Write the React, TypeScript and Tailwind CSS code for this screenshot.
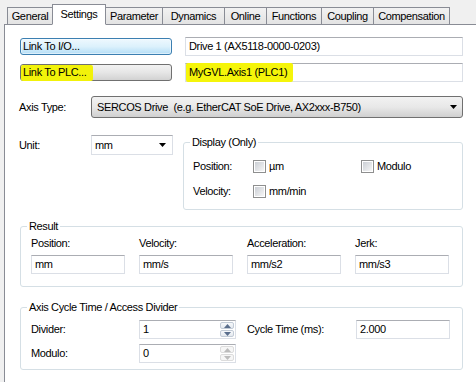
import React from 'react'

const tabs = ['General', 'Settings', 'Parameter', 'Dynamics', 'Online', 'Functions', 'Coupling', 'Compensation']
const tabWidths = [46, 54, 58, 63, 43, 56, 53, 77]

function Arrow() {
  return (
    <svg width="7" height="4" viewBox="0 0 7 4">
      <path d="M0 0 H7 L3.5 4 Z" fill="#000" />
    </svg>
  )
}

function TextBox({ value, className = '' }: { value: string; className?: string }) {
  return (
    <div
      className={`h-[19px] border border-[#dbdfe6] border-t-[#abadb3] bg-white px-[3px] flex items-center ${className}`}
    >
      {value}
    </div>
  )
}

function CheckBox() {
  return (
    <div className="w-[13px] h-[13px] border border-[#8e8f8f] bg-white p-px">
      <div className="w-full h-full bg-gradient-to-br from-[#cbcfd5] to-[#f6f6f6]" />
    </div>
  )
}

function Spinner({ value, disabled }: { value: string; disabled?: boolean }) {
  const arrowColor = disabled ? '#bcbcbc' : '#5a6e8c'
  return (
    <div className="w-[97px] h-[19px] border border-[#dbdfe6] border-t-[#abadb3] bg-white flex">
      <div className="flex-1 px-[3px] flex items-center">{value}</div>
      <div className="w-[16px] flex flex-col gap-px p-px">
        {[0, 1].map(i => (
          <div
            key={i}
            className={`flex-1 flex items-center justify-center rounded-[2px] border ${
              disabled ? 'border-[#dcdcdc] bg-[#f6f6f6]' : 'border-[#c2cbd6] bg-gradient-to-b from-[#f7f9fb] to-[#e4e9ef]'
            }`}
          >
            <svg width="7" height="4" viewBox="0 0 7 4">
              <path d={i === 0 ? 'M0 4 H7 L3.5 0 Z' : 'M0 0 H7 L3.5 4 Z'} fill={arrowColor} />
            </svg>
          </div>
        ))}
      </div>
    </div>
  )
}

function Group({ title, className = '', children }: { title: string; className?: string; children: React.ReactNode }) {
  return (
    <div className={`relative border border-[#d5dfe5] rounded-[3px] ${className}`}>
      <span className="absolute -top-[8px] left-[6px] bg-white px-[2px] leading-[14px]">{title}</span>
      {children}
    </div>
  )
}

export default function App() {
  return (
    <div
      className="w-[476px] h-[382px] bg-[#f0f0f0] overflow-hidden text-[11px] text-black tracking-[-0.35px]"
      style={{ fontFamily: '"Liberation Sans", Arial, sans-serif' }}
    >
      {/* Tab strip */}
      <div className="h-[25px] flex items-end pl-[8px] relative z-10">
        {tabs.map((t, i) => {
          const active = t === 'Settings'
          return (
            <div
              key={t}
              style={{ width: tabWidths[i] }}
              className={`-ml-px flex items-center justify-center border border-[#898c95] ${
                active
                  ? 'h-[21px] bg-white border-b-white relative z-10'
                  : 'h-[17px] mb-px border-b-0 bg-gradient-to-b from-[#f2f2f2] to-[#e3e3e3]'
              }`}
            >
              {t}
            </div>
          )
        })}
      </div>

      {/* Panel */}
      <div className="ml-[4px] -mt-px border-l border-t border-[#898c95] bg-white h-[358px] pl-[15px] pt-[12px]">
        <div className="flex items-center h-[19px]">
          <div className="w-[152px] h-[17px] rounded-[3px] border border-[#3c7fb1] bg-gradient-to-b from-[#eef8fe] via-[#dcf1fc] to-[#b4def6] flex items-center pl-[2px] shadow-[inset_0_0_0_1px_#ffffff80]">
            Link To I/O...
          </div>
          <TextBox value="Drive 1 (AX5118-0000-0203)" className="ml-[13px] w-[278px]" />
        </div>
        <div className="flex items-center h-[19px] mt-[7px]">
          <div className="w-[152px] h-[17px] rounded-[3px] border border-[#707070] bg-gradient-to-b from-[#f2f2f2] via-[#e6e6e6] to-[#d2d2d2] flex items-center">
            <span className="bg-[#f2f20a] h-[16px] flex items-center pl-[2px] pr-[7px] rounded-[2px]">Link To PLC...</span>
          </div>
          <div className="ml-[13px] w-[278px] h-[19px] border border-[#dbdfe6] border-t-[#abadb3] bg-white flex items-center">
            <span className="bg-[#f5f50a] h-[19px] flex items-center px-[3px] pr-[6px] rounded-[2px]">MyGVL.Axis1 (PLC1)</span>
          </div>
        </div>

        {/* Axis type */}
        <div className="flex items-center mt-[14px] h-[22px]">
          <div className="w-[72px] -ml-px">Axis Type:</div>
          <div className="w-[372px] h-[22px] rounded-[3px] border border-[#707070] bg-gradient-to-b from-[#f2f2f2] via-[#e8e8e8] to-[#d0d0d0] flex items-center pl-[5px] pr-[5px]">
            <span className="flex-1 whitespace-pre">SERCOS Drive  (e.g. EtherCAT SoE Drive, AX2xxx-B750)</span>
            <Arrow />
          </div>
        </div>

        {/* Unit + display */}
        <div className="flex items-start mt-[17px]">
          <div className="w-[72px] -ml-px h-[20px] flex items-center">Unit:</div>
          <div className="w-[82px] h-[20px] border border-[#dbdfe6] border-t-[#abadb3] bg-white flex items-center pl-[3px] pr-[6px]">
            <span className="flex-1">mm</span>
            <Arrow />
          </div>
          <Group title="Display (Only)" className="ml-[10px] mt-[7px] w-[280px] h-[68px]">
            <div className="flex items-center mt-[16px] h-[14px]">
              <span className="w-[69px] pl-[9px]">Position:</span>
              <CheckBox />
              <span className="ml-[3px] w-[92px]">µm</span>
              <CheckBox />
              <span className="ml-[3px]">Modulo</span>
            </div>
            <div className="flex items-center mt-[11px] h-[14px]">
              <span className="w-[69px] pl-[9px]">Velocity:</span>
              <CheckBox />
              <span className="ml-[3px]">mm/min</span>
            </div>
          </Group>
        </div>

        {/* Result */}
        <Group title="Result" className="mt-[16px] w-[443px] h-[61px]">
          <div className="grid grid-cols-4 gap-x-[14px] pl-[10px] pr-[13px] mt-[10px]">
            {[
              ['Position:', 'mm'],
              ['Velocity:', 'mm/s'],
              ['Acceleration:', 'mm/s2'],
              ['Jerk:', 'mm/s3'],
            ].map(([l, v]) => (
              <div key={l} className="flex flex-col">
                <span className="h-[13px] leading-[13px]">{l}</span>
                <TextBox value={v} className="mt-[5px] w-[94px]" />
              </div>
            ))}
          </div>
        </Group>

        {/* Cycle time */}
        <Group title="Axis Cycle Time / Access Divider" className="mt-[20px] w-[443px] h-[63px]">
          <div className="flex items-start mt-[12px] pl-[10px]">
            <div className="flex flex-col">
              <div className="flex items-center h-[19px]">
                <span className="w-[108px]">Divider:</span>
                <Spinner value="1" />
              </div>
              <div className="flex items-center h-[19px] mt-[5px]">
                <span className="w-[108px]">Modulo:</span>
                <Spinner value="0" disabled />
              </div>
            </div>
            <div className="flex items-center h-[19px] ml-[11px]">
              <span className="w-[109px]">Cycle Time (ms):</span>
              <TextBox value="2.000" className="w-[94px]" />
            </div>
          </div>
        </Group>
      </div>
    </div>
  )
}
